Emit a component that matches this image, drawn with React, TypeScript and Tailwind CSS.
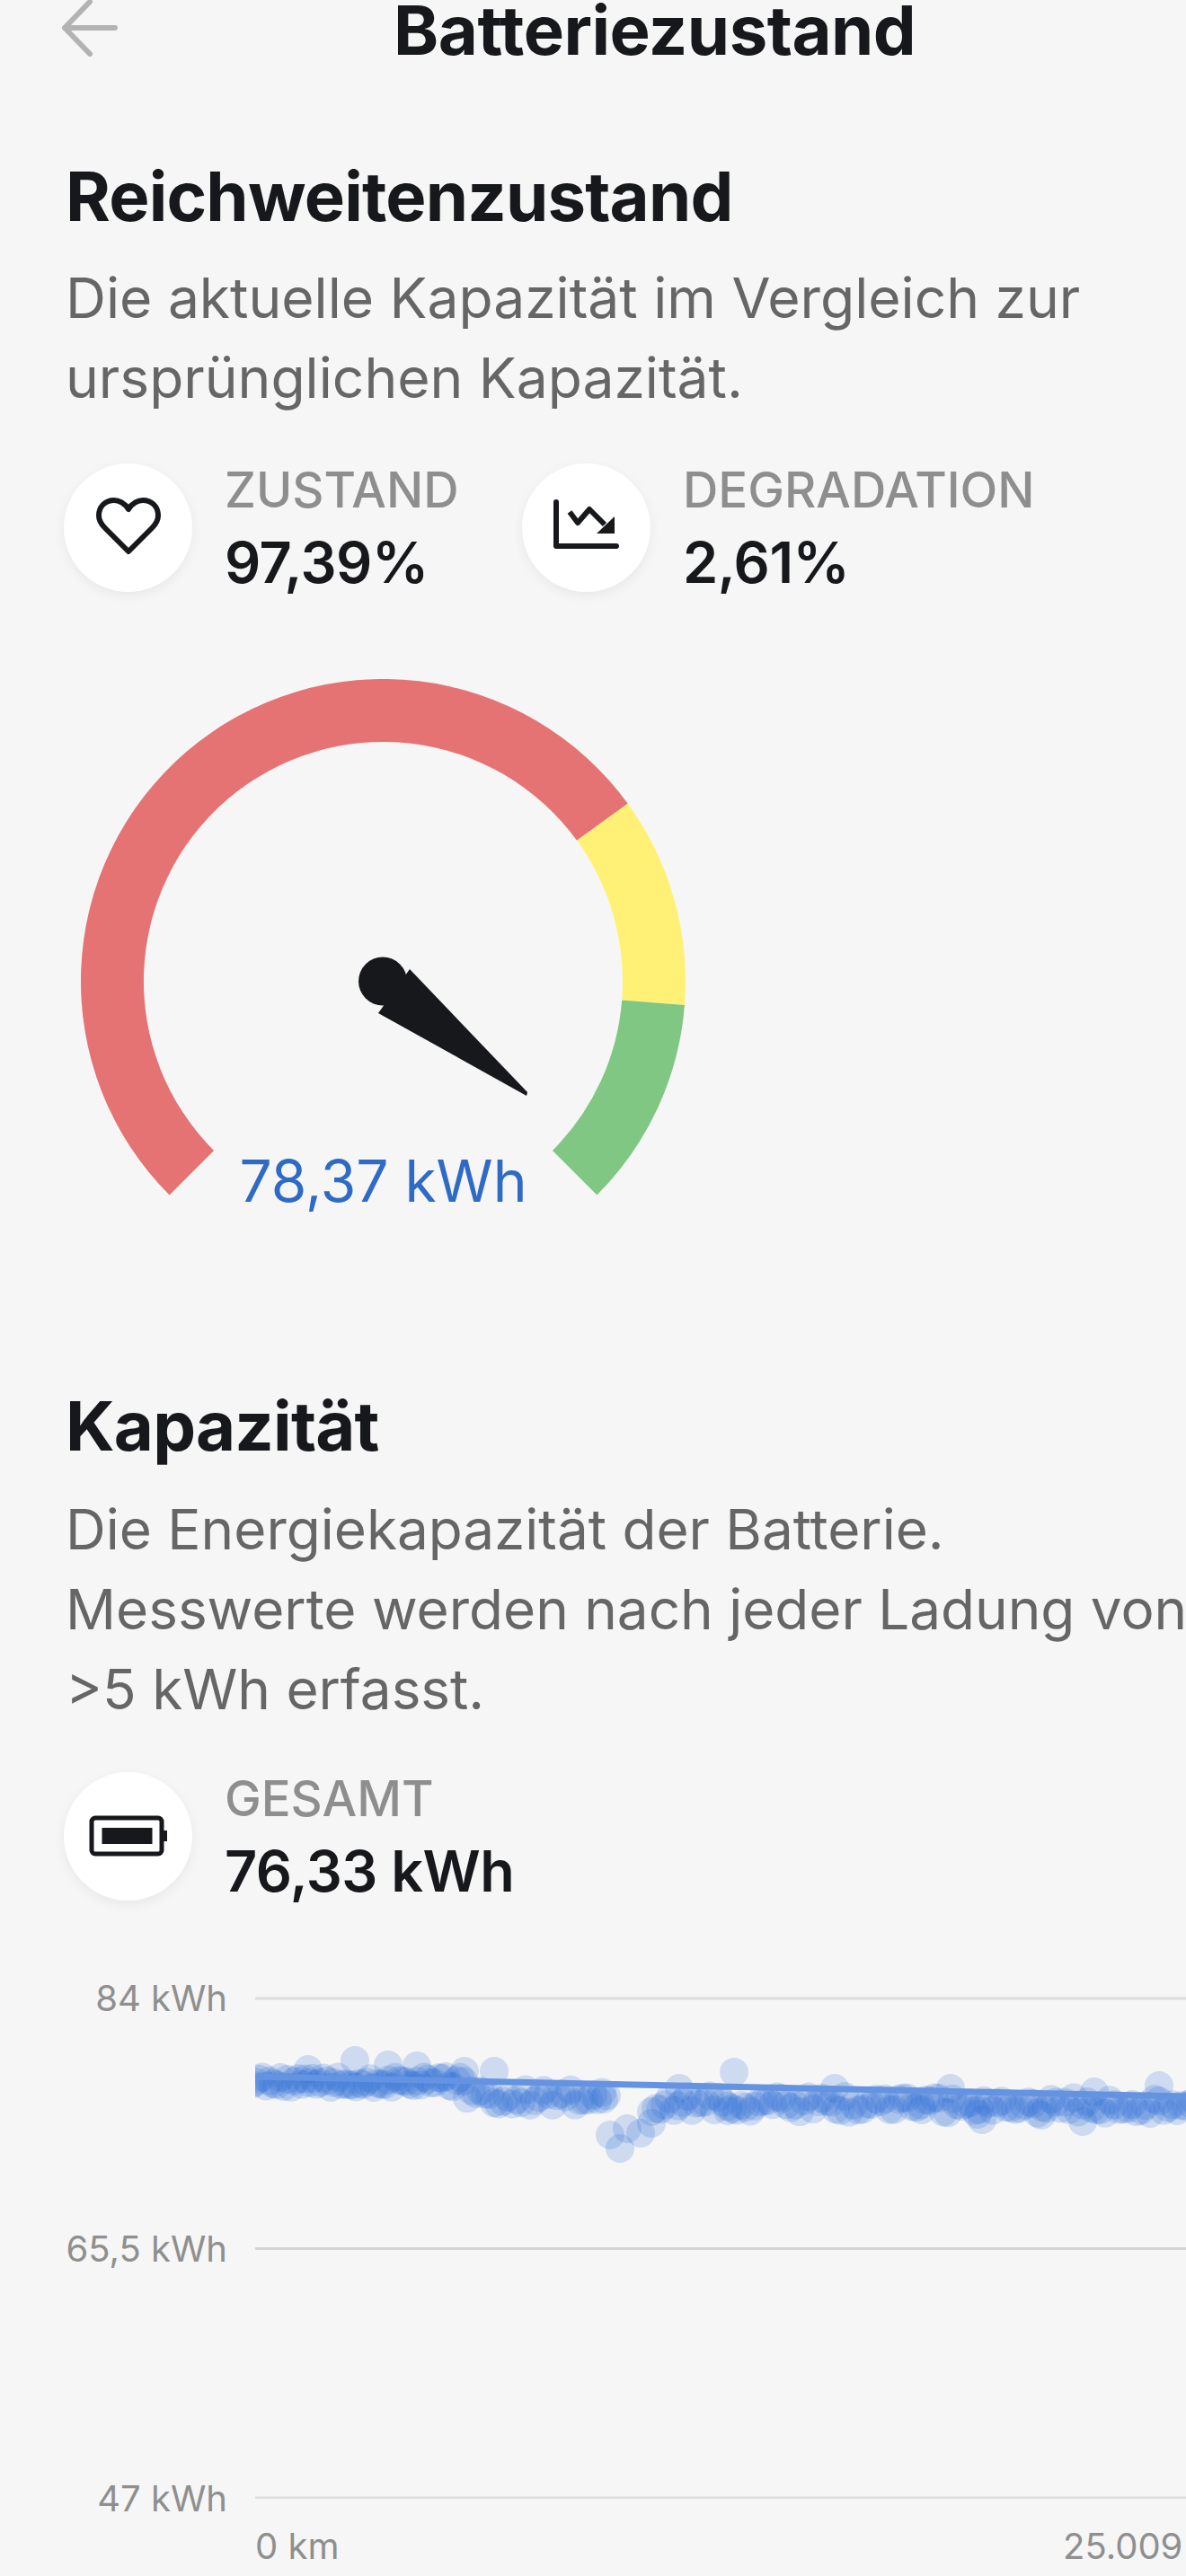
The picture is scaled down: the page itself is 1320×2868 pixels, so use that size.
import React from "react";

const font = { fontFamily: "Inter, 'Liberation Sans', sans-serif" };

// gauge geometry in page px, svg starts at x 90, y 755
const CX = 336.5;
const CY = 336.5;
function arc(from: number, to: number) {
  const R = 336.5;
  const r = 266.5;
  const p = (rad: number, a: number) => {
    const t = (a * Math.PI) / 180;
    return `${(CX + rad * Math.cos(t)).toFixed(2)} ${(CY + rad * Math.sin(t)).toFixed(2)}`;
  };
  const large = to - from > 180 ? 1 : 0;
  return `M${p(R, from)} A${R} ${R} 0 ${large} 1 ${p(R, to)} L${p(r, to)} A${r} ${r} 0 ${large} 0 ${p(r, from)} Z`;
}

function makePoints() {
  const pts: [number, number][] = [];
  let seed = 17;
  const rnd = () => {
    seed = (seed * 1103515245 + 12345) % 2147483648;
    return seed / 2147483648;
  };
  for (let x = 280; x < 1335; x += x < 520 ? 4 : 5) {
    if (x > 676 && x < 724) continue;
    let base = 2316;
    if (x >= 520 && x < 680) base = 2333;
    if (x >= 724) base = 2340 + (x - 724) * 0.004;
    pts.push([x, base + (rnd() - 0.5) * (x < 520 ? 12 : 18)]);
  }
  return pts.concat([
    [343, 2302], [395, 2292], [432, 2297], [464, 2298], [517, 2304], [550, 2304],
    [672, 2335], [679, 2375], [690, 2390], [698, 2368], [713, 2373], [725, 2362],
    [756, 2323], [817, 2305], [810, 2348], [929, 2323], [1026, 2347], [1058, 2323],
    [1093, 2358], [1088, 2352], [1159, 2353], [1205, 2360], [1218, 2327], [1290, 2320],
  ]);
}

const points = makePoints();

function StatCircle({ children }: { children: React.ReactNode }) {
  return (
    <div className="flex h-[143px] w-[143px] shrink-0 items-center justify-center rounded-full bg-white shadow-[0_4px_14px_rgba(0,0,0,0.06)]">
      {children}
    </div>
  );
}

function Stat({ label, value, icon, className }: { label: string; value: string; icon: React.ReactNode; className?: string }) {
  return (
    <div className={`flex items-start ${className ?? ""}`}>
      <StatCircle>{icon}</StatCircle>
      <div className="ml-[36px] -mt-[1px]">
        <div className="text-[54.5px] leading-[60px] font-medium text-[#8e8e8e]">{label}</div>
        <div className="mt-[18px] text-[63px] leading-[66px] font-semibold tracking-[-0.5px] text-[#16181b]">{value}</div>
      </div>
    </div>
  );
}

export default function App() {
  return (
    <div className="h-[2868px] w-[1320px] overflow-hidden bg-[#f6f6f6]" style={font}>
      <div className="flex h-[70px] items-center pl-[68px]">
        <svg width="64" height="64" viewBox="0 0 64 64" fill="none" stroke="#b3b3b3" strokeWidth="6" strokeLinecap="round" strokeLinejoin="round" className="-mt-[8px]">
          <path d="M4 32H60M32 3L4 32L32 61" />
        </svg>
        <h1 className="ml-[306px] -mt-[4px] text-[76px] leading-[66px] font-bold tracking-[-0.5px] whitespace-nowrap text-[#16181b]">Batteriezustand</h1>
      </div>

      <div className="px-[73px] pt-[108px]">
        <h2 className="text-[76px] leading-[80px] font-bold tracking-[-0.8px] text-[#16181b]">Reichweitenzustand</h2>
        <p className="mt-[29px] text-[62.3px] leading-[89px] text-[#666666]">
          Die aktuelle Kapazität im Vergleich zur
          <br />
          ursprünglichen Kapazität.
        </p>
      </div>

      <div className="mt-[51px] flex pl-[71px]">
        <Stat
          label="ZUSTAND"
          value="97,39%"
          className="w-[510px]"
          icon={
            <svg width="72" height="64" viewBox="0 0 72 64" fill="none" stroke="#16181b" strokeWidth="6" strokeLinejoin="round" className="-mt-[6px]">
              <path d="M36 14C32 7 25 4 20 4C10 4 3 11 3 21C3 27 6 31 10 35L36 61L62 35C66 31 69 27 69 21C69 11 62 4 52 4C47 4 40 7 36 14Z" />
            </svg>
          }
        />
        <Stat
          label="DEGRADATION"
          value="2,61%"
          icon={
            <svg width="76" height="60" viewBox="0 0 76 60" fill="none" className="-mt-[4px]">
              <path d="M4 3V52H71" stroke="#16181b" strokeWidth="6" strokeLinecap="round" strokeLinejoin="round" />
              <path d="M19 14L28 26L41 11L58 28" stroke="#16181b" strokeWidth="6" strokeLinejoin="round" />
              <path d="M69 19V38H49Z" fill="#16181b" />
            </svg>
          }
        />
      </div>

      <div className="relative mt-[97px] ml-[90px] h-[640px] w-[673px]">
        <svg width="673" height="600" viewBox="0 0 673 600">
          <path d={arc(135, 324)} fill="#e57373" />
          <path d={arc(324, 364.5)} fill="#fff176" />
          <path d={arc(364.5, 405)} fill="#81c784" />
          <circle cx="336" cy="336.5" r="27" fill="#16181b" />
          <path d="M366 323L497 460L496 464L331 372Z" fill="#16181b" />
        </svg>
        <div className="absolute top-[520px] left-0 w-full text-center text-[64px] leading-[78px] text-[#2f6bc4]">78,37 kWh</div>
      </div>

      <div className="px-[73px] pt-[151px]">
        <h2 className="text-[76px] leading-[80px] font-bold tracking-[-0.8px] text-[#16181b]">Kapazität</h2>
        <p className="mt-[31px] text-[62px] leading-[89px] whitespace-nowrap text-[#666666]">
          Die Energiekapazität der Batterie.
          <br />
          Messwerte werden nach jeder Ladung von
          <br />
          {">"}5 kWh erfasst.
        </p>
      </div>

      <div className="mt-[48px] flex pl-[71px]">
        <Stat
          label="GESAMT"
          value="76,33 kWh"
          icon={
            <svg width="88" height="46" viewBox="0 0 88 46" fill="none" className="-mt-[2px]">
              <rect x="3" y="3" width="78" height="40" rx="4" stroke="#16181b" strokeWidth="5" />
              <rect x="14.5" y="14" width="56" height="18" fill="#16181b" />
              <rect x="83" y="17" width="4" height="12" fill="#16181b" />
            </svg>
          }
        />
      </div>

      <div className="mt-[106px] flex">
        <div className="flex h-[640px] w-[253px] shrink-0 flex-col items-end text-[40px] leading-[48px] text-[#8f8f8f]">
          <div className="-mt-[21px]">84 kWh</div>
          <div className="mt-[231px]">65,5 kWh</div>
          <div className="mt-[230px]">47 kWh</div>
        </div>
        <div className="ml-[31px] min-w-0 flex-1 overflow-hidden">
          <svg width="1036" height="560" viewBox="284 2220 1036 560" className="block">
            <line x1="284" x2="1320" y1="2223" y2="2223" stroke="#dcdcdc" strokeWidth="3" />
            <line x1="284" x2="1320" y1="2501.5" y2="2501.5" stroke="#d4d4d4" strokeWidth="3" />
            <line x1="284" x2="1320" y1="2779" y2="2779" stroke="#dcdcdc" strokeWidth="3" />
            {points.map(([x, y], i) => (
              <circle key={i} cx={x} cy={y} r="16" fill="#2f6fd6" fillOpacity="0.2" />
            ))}
            <line x1="284" x2="1320" y1="2310" y2="2332" stroke="#6493e2" strokeWidth="7" />
          </svg>
          <div className="mt-[29px] flex whitespace-nowrap text-[40px] leading-[48px] text-[#8f8f8f]">
            <span className="w-[899px] shrink-0">0 km</span>
            <span className="shrink-0">25.009 km</span>
          </div>
        </div>
      </div>
    </div>
  );
}
